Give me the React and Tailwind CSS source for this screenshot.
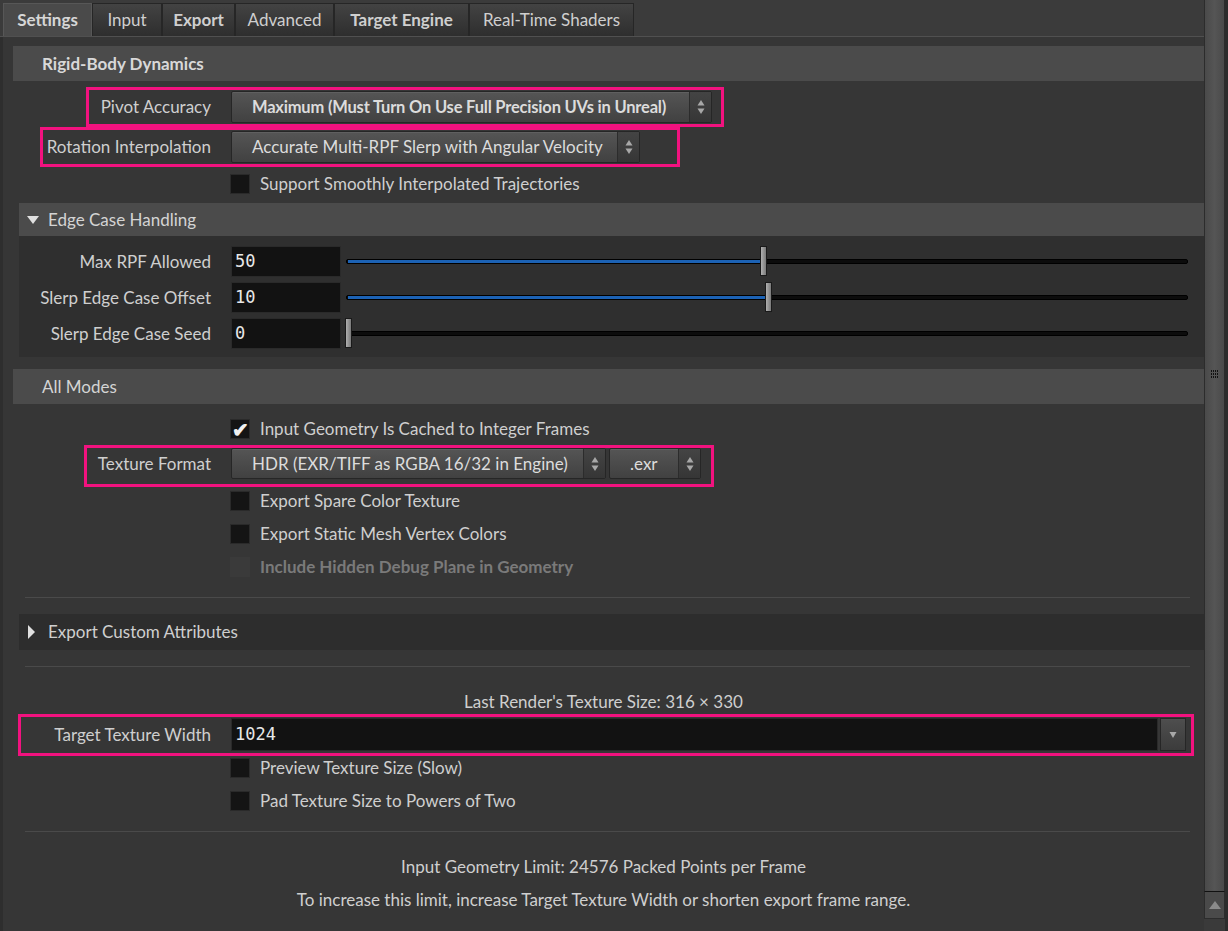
import React from 'react'

const font = { fontFamily: 'Lato, "Noto Sans", sans-serif' }
const mono = { fontFamily: '"DejaVu Sans Mono", monospace', fontSize: '17px' }

const tabs = [
  { name: 'Settings', bold: true, active: true, w: 'w-[89px]' },
  { name: 'Input', w: 'w-[70px]' },
  { name: 'Export', bold: true, w: 'w-[73px]' },
  { name: 'Advanced', w: 'w-[99px]' },
  { name: 'Target Engine', bold: true, w: 'w-[135px]' },
  { name: 'Real-Time Shaders', w: 'w-[165px]' },
]

const Arrows = () => (
  <svg width="8" height="16" viewBox="0 0 8 16">
    <path d="M4 1 L7.5 6.5 L0.5 6.5 Z" fill="#a8a8a8" />
    <path d="M4 15 L7.5 9.5 L0.5 9.5 Z" fill="#a8a8a8" />
  </svg>
)

const Dropdown = ({ text, width, bold, pad = 'pl-[20px]' }) => (
  <div className={`flex h-full ${width} rounded-[2px] border border-[#262626] bg-gradient-to-b from-[#555555] to-[#414141] text-[#dcdcdc] shadow-[inset_0_1px_0_#606060]`}>
    <div className={`flex flex-1 items-center overflow-hidden whitespace-nowrap ${pad} ${bold ? 'font-bold text-[16.5px] tracking-[-0.2px]' : ''}`}>{text}</div>
    <div className="flex w-[22px] items-center justify-center bg-gradient-to-b from-[#444444] to-[#363636] border-l border-[#2c2c2c]">
      <Arrows />
    </div>
  </div>
)

const Pink = ({ cls }) => (
  <div className={`absolute border-[3px] border-[#f2127f] pointer-events-none ${cls}`} />
)

const Label = ({ children }) => (
  <div className="w-[208px] shrink-0 whitespace-nowrap text-right text-[#cfcfcf]">{children}</div>
)

const Check = ({ text, checked, disabled }) => (
  <div className="flex h-[33px] items-center pl-[227px]">
    <div className={`flex h-[20px] w-[20px] items-center justify-center border ${disabled ? 'border-[#3a3a3a] bg-[#3a3a3a]' : 'border-[#2a2a2a] bg-[#141414]'}`}>
      {checked && <span className="text-[20px] font-bold leading-none text-[#f0f0f0]">✔</span>}
    </div>
    <span className={`ml-[10px] ${disabled ? 'font-bold text-[#7a7a7a]' : 'text-[#cfcfcf]'}`}>{text}</span>
  </div>
)

const Slider = ({ label, v, handle, fill }) => (
  <div className="flex h-[31px] items-center">
    <Label>{label}</Label>
    <div className="ml-[20px] flex h-full w-[110px] items-center border border-[#2a2a2a] bg-[#121212] pl-[3px] text-[#e8e8e8]" style={mono}>
      {v}
    </div>
    <div className="relative ml-[5px] h-full w-[842px]">
      <div className="absolute left-0 right-0 top-[13px] h-[5px] rounded-[2px] border border-[#000] bg-[#0c0c0c]" />
      {fill > 0 && <div className="absolute left-[2px] top-[14px] h-[3px] bg-[#1c62b4]" style={{ width: fill }} />}
      <div className="absolute top-0 h-[30px] w-[7px] border border-[#1a1a1a] bg-gradient-to-r from-[#b0b0b0] to-[#7a7a7a]" style={{ left: handle }} />
    </div>
  </div>
)

const Sep = ({ cls }) => <div className={`ml-[22px] mr-[14px] h-px bg-[#4a4a4a] ${cls}`} />

export default function App() {
  return (
    <div className="flex h-[931px] w-[1228px] overflow-hidden bg-[#3b3b3b] text-[17px]" style={font}>
      <div className="flex w-[1204px] flex-col">
        <div className="flex h-[37px] items-end border-b border-[#505050] pl-[3px]">
          {tabs.map((t) => (
            <div
              key={t.name}
              className={`flex h-[33px] ${t.w} items-center justify-center border border-b-0 text-[17px] ${
                t.active
                  ? 'border-[#575757] bg-[#4a4a4a] text-[#d6d6d6]'
                  : 'border-[#262626] bg-gradient-to-b from-[#434343] to-[#2e2e2e] text-[#cfcfcf]'
              } ${t.bold ? 'font-bold' : ''}`}
            >
              {t.name}
            </div>
          ))}
        </div>

        <div className="flex-1 border-l-[3px] border-[#2e2e2e] bg-[#363636]">
          <div className="ml-[10px] mt-[9px] flex h-[35px] items-center bg-[#4b4b4b] pl-[29px] font-bold text-[#d8d8d8]">
            Rigid-Body Dynamics
          </div>

          <div className="relative mt-[10px] flex h-[32px] items-center">
            <Pink cls="left-[83px] top-[-4px] h-[40px] w-[638px]" />
            <Label>Pivot Accuracy</Label>
            <div className="ml-[20px] h-full">
              <Dropdown text="Maximum (Must Turn On Use Full Precision UVs in Unreal)" width="w-[481px]" bold />
            </div>
          </div>

          <div className="relative mt-[8px] flex h-[32px] items-center">
            <Pink cls="left-[37px] top-[-4px] h-[40px] w-[640px]" />
            <Label>Rotation Interpolation</Label>
            <div className="ml-[20px] h-full">
              <Dropdown text="Accurate Multi-RPF Slerp with Angular Velocity" width="w-[409px]" />
            </div>
          </div>

          <div className="h-[4px]" />
          <Check text="Support Smoothly Interpolated Trajectories" />

          <div className="ml-[16px] mt-[3px] flex h-[33px] items-center bg-[#4b4b4b] pl-[8px] text-[#d4d4d4]">
            <svg width="12" height="10" viewBox="0 0 12 10" className="mr-[9px]">
              <path d="M0 1 L12 1 L6 9 Z" fill="#e0e0e0" />
            </svg>
            Edge Case Handling
          </div>
          <div className="ml-[16px] bg-[#2f2f2f] pb-[8px] pt-[10px]">
            <div className="-ml-[16px] flex flex-col gap-[5px]">
              <Slider label="Max RPF Allowed" v="50" handle={414} fill={412} />
              <Slider label="Slerp Edge Case Offset" v="10" handle={419} fill={417} />
              <Slider label="Slerp Edge Case Seed" v="0" handle={-1} fill={0} />
            </div>
          </div>

          <div className="ml-[10px] mt-[12px] flex h-[35px] items-center bg-[#4b4b4b] pl-[29px] text-[#d4d4d4]">
            All Modes
          </div>

          <div className="h-[8px]" />
          <Check text="Input Geometry Is Cached to Integer Frames" checked />

          <div className="relative mt-[3px] flex h-[31px] items-center">
            <Pink cls="left-[81px] top-[-3px] h-[42px] w-[630px]" />
            <Label>Texture Format</Label>
            <div className="ml-[20px] flex h-full gap-[3px]">
              <Dropdown text="HDR (EXR/TIFF as RGBA 16/32 in Engine)" width="w-[375px]" />
              <Dropdown text=".exr" width="w-[92px]" />
            </div>
          </div>
          <div className="h-[5px]" />
          <Check text="Export Spare Color Texture" />
          <Check text="Export Static Mesh Vertex Colors" />
          <Check text="Include Hidden Debug Plane in Geometry" disabled />

          <Sep cls="mt-[14px]" />

          <div className="ml-[16px] mt-[16px] flex h-[36px] items-center bg-[#2d2d2d] pl-[9px] text-[#cfcfcf]">
            <svg width="7" height="14" viewBox="0 0 7 14" className="mr-[13px]">
              <path d="M0 0 L7 7 L0 14 Z" fill="#e0e0e0" />
            </svg>
            Export Custom Attributes
          </div>

          <Sep cls="mt-[16px]" />

          <div className="mt-[25px] h-[20px] text-center leading-[20px] text-[#cfcfcf]">
            Last Render's Texture Size: 316 × 330
          </div>

          <div className="relative mt-[6px] flex h-[33px] items-center">
            <Pink cls="left-[15px] top-[-4px] h-[42px] w-[1176px]" />
            <Label>Target Texture Width</Label>
            <div className="ml-[20px] flex h-full">
              <div className="flex h-full w-[927px] items-center border border-[#2a2a2a] bg-[#121212] pl-[3px] text-[#e8e8e8]" style={mono}>
                1024
              </div>
              <div className="ml-[2px] flex h-full w-[26px] items-center justify-center border border-[#262626] bg-gradient-to-b from-[#4e4e4e] to-[#3c3c3c]">
                <svg width="8" height="8" viewBox="0 0 8 8">
                  <path d="M0.5 1 L7.5 1 L4 7 Z" fill="#a8a8a8" />
                </svg>
              </div>
            </div>
          </div>

          <Check text="Preview Texture Size (Slow)" />
          <Check text="Pad Texture Size to Powers of Two" />

          <Sep cls="mt-[14px]" />

          <div className="mt-[23px] h-[24px] text-center leading-[24px] text-[#cfcfcf]">
            Input Geometry Limit: 24576 Packed Points per Frame
          </div>
          <div className="mt-[9px] h-[24px] text-center leading-[24px] text-[#cfcfcf]">
            To increase this limit, increase Target Texture Width or shorten export frame range.
          </div>
        </div>
      </div>

      <div className="flex w-[24px] flex-col border-r-[3px] border-[#2c2c2c] bg-[#363636]">
        <div className="flex flex-1 flex-col items-center border-x border-[#2c2c2c] bg-gradient-to-r from-[#4a4a4a] via-[#555555] to-[#4a4a4a] pt-[370px]">
          <svg width="8" height="10" viewBox="0 0 8 10">
            {[0, 3, 6].map((y) =>
              [0, 2, 4, 6].map((x) => <rect key={`${x}-${y}`} x={x} y={y} width="1" height="2" fill="#111" />)
            )}
          </svg>
        </div>
        <div className="flex h-[28px] items-center justify-center border border-t-[#111] border-[#2c2c2c] bg-[#4a4a4a]">
          <svg width="12" height="8" viewBox="0 0 12 8">
            <path d="M6 0 L12 8 L0 8 Z" fill="#8a8a8a" />
          </svg>
        </div>
        <div className="h-[12px] bg-[#3a3a3a]" />
      </div>
    </div>
  )
}
